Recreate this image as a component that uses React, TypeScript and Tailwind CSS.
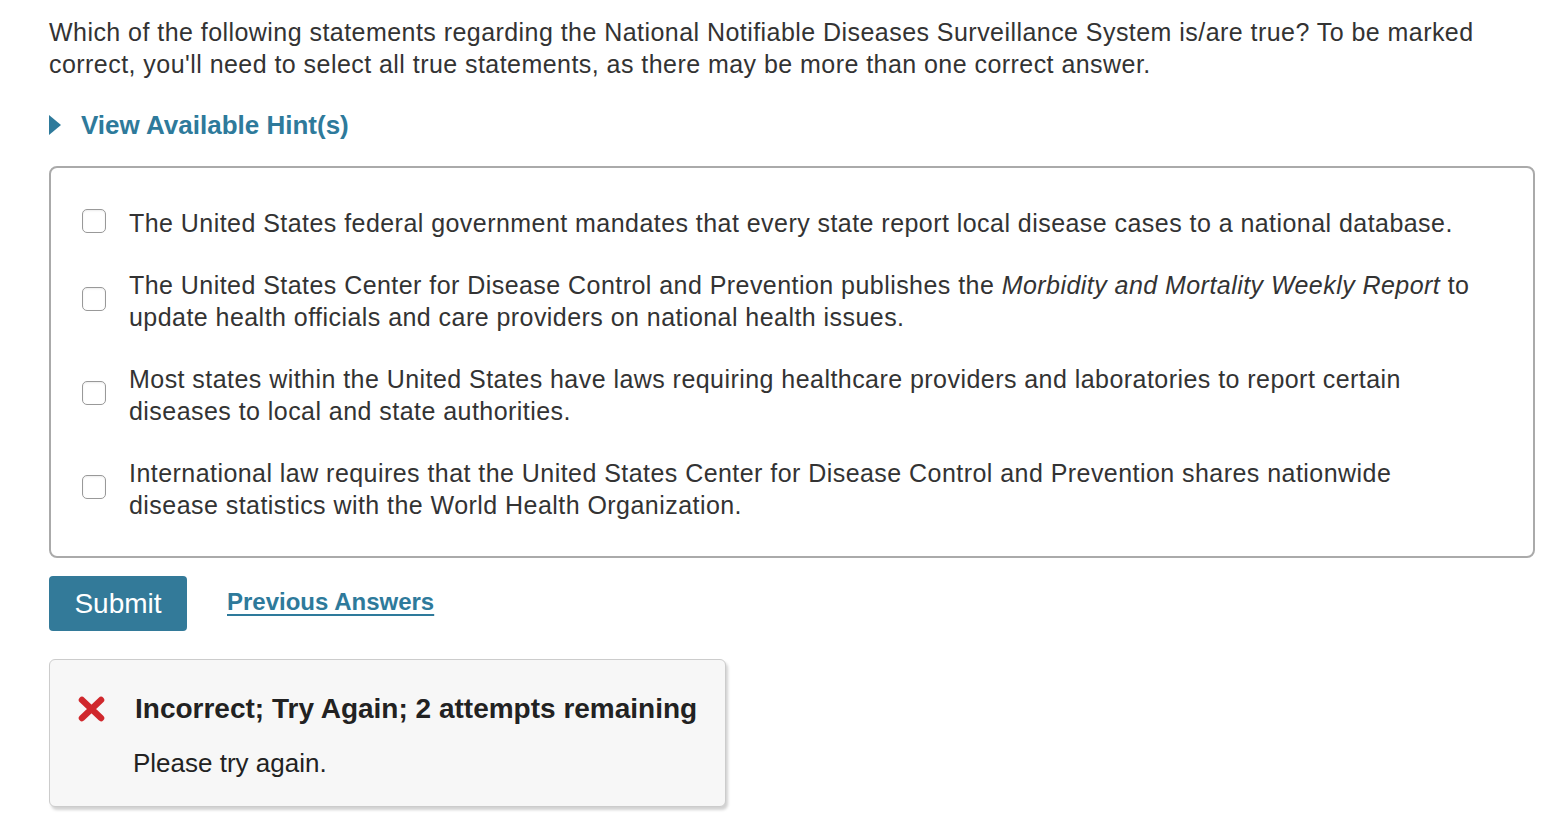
import React from "react";

const options = [
  <>The United States federal government mandates that every state report local disease cases to a national database.</>,
  <>
    The United States Center for Disease Control and Prevention publishes the{" "}
    <em>Morbidity and Mortality Weekly Report</em> to update health officials and care providers on national health issues.
  </>,
  <>Most states within the United States have laws requiring healthcare providers and laboratories to report certain diseases to local and state authorities.</>,
  <>International law requires that the United States Center for Disease Control and Prevention shares nationwide disease statistics with the World Health Organization.</>,
];

export default function App() {
  return (
    <div
      className="min-h-screen bg-white pl-[49px] pr-[11px] pt-4 text-[#333]"
      style={{ fontFamily: '"Liberation Sans", Arial, sans-serif' }}
    >
      <p className="pr-[40px] text-[25px] leading-[32px] tracking-[0.45px]">
        Which of the following statements regarding the National Notifiable Diseases Surveillance System is/are true? To be marked
        correct, you'll need to select all true statements, as there may be more than one correct answer.
      </p>

      <div className="mt-[29px] flex items-center gap-[20px] text-[#2e7a9b]">
        <svg width="12" height="20" viewBox="0 0 12 20" className="shrink-0">
          <path d="M0 0 L12 10 L0 20 Z" fill="#2e7a9b" />
        </svg>
        <span className="text-[26px] font-bold leading-[32px]">View Available Hint(s)</span>
      </div>

      {/* answer choices */}
      <div className="mt-[25px] rounded-[8px] border-2 border-[#aaa] pl-[31px] pr-[56px] pt-[39px] pb-[35px]">
        <div className="flex flex-col gap-[30px]">
          {options.map((o, i) => (
            <label key={i} className="flex items-center gap-[23px]">
              <span className="block h-[24px] w-[24px] shrink-0 -translate-y-[2px] rounded-[5px] border border-[#999] bg-white shadow-[inset_0_1px_2px_rgba(0,0,0,0.08)]" />
              <span className="text-[25px] leading-[32px] tracking-[0.45px]">{o}</span>
            </label>
          ))}
        </div>
      </div>

      <div className="mt-[18px] flex items-center gap-[40px]">
        <button className="h-[55px] w-[138px] rounded-[4px] bg-[#337a99] text-[28px] text-white">Submit</button>
        <a className="-mt-[3px] text-[24px] font-bold text-[#2e7a9b] underline underline-offset-[4px]">Previous Answers</a>
      </div>

      <div className="mt-[28px] w-[677px] rounded-[6px] border border-[#ccc] bg-[#f7f7f7] pl-[28px] pr-[20px] pt-[33px] pb-[27px] shadow-[2px_3px_3px_rgba(0,0,0,0.18)]">
        <div className="flex items-center gap-[30px]">
          <svg width="27" height="26" viewBox="0 0 27 26" className="shrink-0">
            <path d="M4 4 L23 22 M23 4 L4 22" stroke="#d0282d" strokeWidth="6.5" strokeLinecap="round" />
          </svg>
          <span className="text-[28px] font-bold leading-[32px] text-[#222]">Incorrect; Try Again; 2 attempts remaining</span>
        </div>
        <p className="mt-[22px] pl-[55px] text-[26px] leading-[32px] text-[#222]">Please try again.</p>
      </div>
    </div>
  );
}
